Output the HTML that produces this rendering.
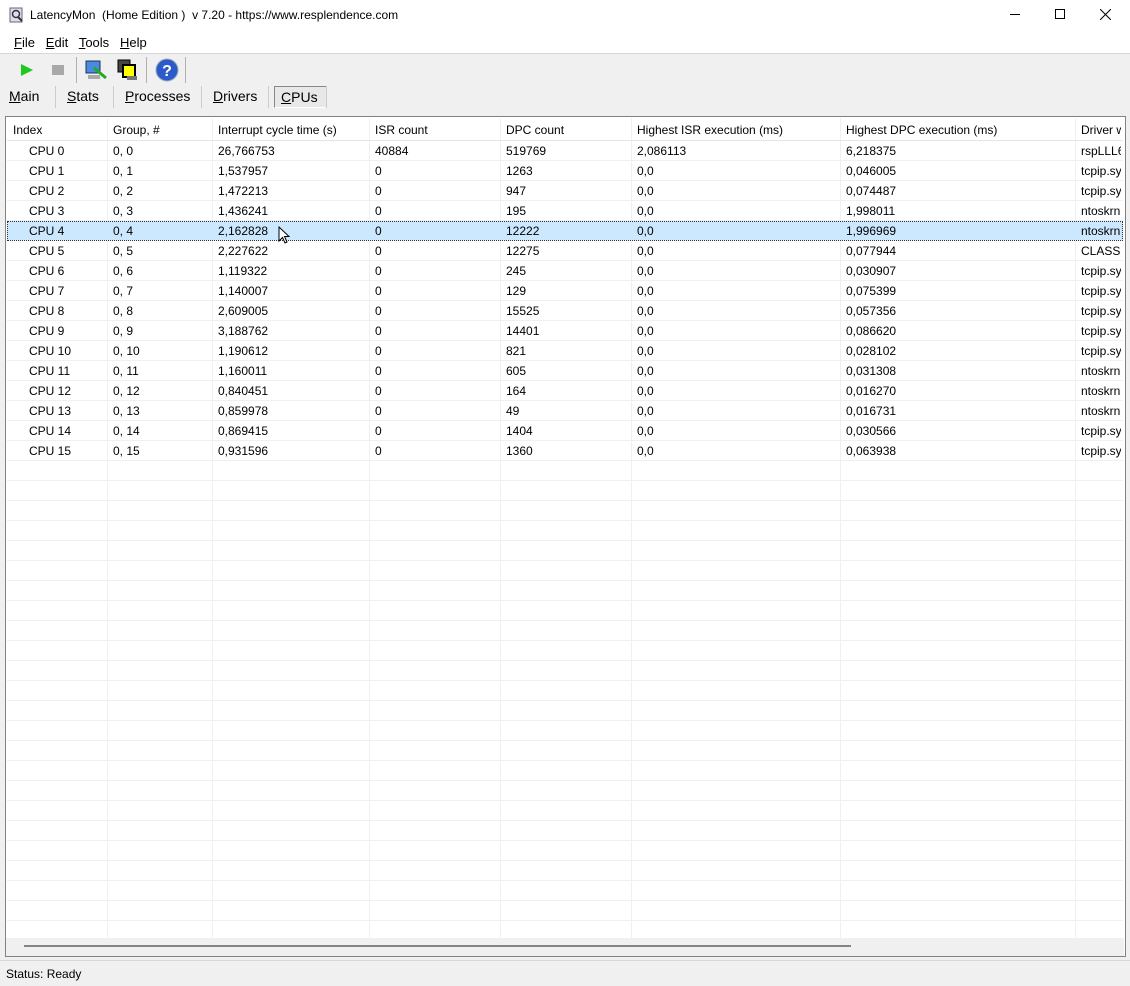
<!DOCTYPE html><html><head><style>
*{margin:0;padding:0;box-sizing:border-box}
body{width:1130px;height:986px;background:#f0f0f0;font-family:"Liberation Sans",sans-serif;font-size:12px;color:#000;position:relative;overflow:hidden}
.a{position:absolute;white-space:nowrap}
.row{position:absolute;left:7px;width:1116px;height:20px;border-bottom:1px solid #f0f0f0}
.c{position:absolute;top:3px;white-space:nowrap;overflow:hidden}
.vl{position:absolute;top:118px;height:820px;width:1px;background:#f0f0f0}
u{text-decoration:underline}
</style></head><body>
<div class="a" style="left:0;top:0;width:1130px;height:32px;background:#fff"></div>
<svg class="a" style="left:9px;top:7px" width="16" height="16"><rect x="1" y="1" width="12" height="14" fill="#dde" stroke="#667"/><circle cx="7" cy="7" r="3.5" fill="none" stroke="#334" stroke-width="1.5"/><line x1="9" y1="10" x2="13" y2="14" stroke="#334" stroke-width="2"/></svg>
<div class="a" style="left:30px;top:8px;font-size:12px">LatencyMon&nbsp; (Home Edition )&nbsp; v 7.20 - https://www.resplendence.com</div>
<div class="a" style="left:1010px;top:14px;width:10px;height:1px;background:#000"></div>
<div class="a" style="left:1055px;top:9px;width:10px;height:10px;border:1px solid #000"></div>
<svg class="a" style="left:1100px;top:9px" width="11" height="11"><path d="M0 0L11 11M11 0L0 11" stroke="#000"/></svg>
<div class="a" style="left:0;top:32px;width:1130px;height:21px;background:#fff"></div>
<div class="a" style="left:14px;top:35px;font-size:13px"><u>F</u>ile&nbsp;&nbsp; <u>E</u>dit&nbsp;&nbsp; <u>T</u>ools&nbsp;&nbsp; <u>H</u>elp</div>
<div class="a" style="left:0;top:53px;width:1130px;height:1px;background:#d8d8d8"></div>
<svg class="a" style="left:20px;top:63px" width="14" height="14"><path d="M1 1L13 7L1 13Z" fill="#1ec81e"/></svg>
<div class="a" style="left:52px;top:65px;width:12px;height:10px;background:#a8a8a8"></div>
<div class="a" style="left:76px;top:57px;width:1px;height:26px;background:#b0b0b0"></div>
<svg class="a" style="left:84px;top:58px" width="24" height="24"><rect x="2" y="3" width="14" height="12" fill="#4a8ae0" stroke="#235"/><rect x="4" y="17" width="12" height="4" fill="#aaa"/><path d="M10 10L22 20" stroke="#2a2" stroke-width="3"/></svg>
<svg class="a" style="left:117px;top:59px" width="22" height="22"><rect x="1" y="1" width="12" height="12" fill="#444" stroke="#000"/><rect x="6" y="6" width="12" height="12" fill="#ff0" stroke="#000" stroke-width="2"/><rect x="10" y="17" width="10" height="4" fill="#777"/></svg>
<div class="a" style="left:146px;top:57px;width:1px;height:26px;background:#b0b0b0"></div>
<svg class="a" style="left:155px;top:58px" width="24" height="24"><circle cx="12" cy="12" r="11" fill="#2a5bc8" stroke="#9ab"/><text x="12" y="18" font-size="16" font-weight="bold" fill="#fff" text-anchor="middle" font-family="Liberation Sans">?</text></svg>
<div class="a" style="left:185px;top:57px;width:1px;height:26px;background:#b0b0b0"></div>
<div class="a" style="left:9px;top:88px;font-size:14px"><u>M</u>ain</div>
<div class="a" style="left:55px;top:86px;width:1px;height:22px;background:#ccc"></div>
<div class="a" style="left:67px;top:88px;font-size:14px"><u>S</u>tats</div>
<div class="a" style="left:113px;top:86px;width:1px;height:22px;background:#ccc"></div>
<div class="a" style="left:125px;top:88px;font-size:14px"><u>P</u>rocesses</div>
<div class="a" style="left:201px;top:86px;width:1px;height:22px;background:#ccc"></div>
<div class="a" style="left:213px;top:88px;font-size:14px"><u>D</u>rivers</div>
<div class="a" style="left:268px;top:86px;width:1px;height:22px;background:#ccc"></div>
<div class="a" style="left:274px;top:86px;width:53px;height:22px;border:1px solid #888;border-right-color:#fff;border-bottom-color:#fff;background:#e8e8e8"></div>
<div class="a" style="left:281px;top:89px;font-size:14px"><u>C</u>PUs</div>
<div class="a" style="left:326px;top:86px;width:1px;height:22px;background:#ccc"></div>
<div class="a" style="left:5px;top:116px;width:1121px;height:841px;border:1px solid #828282;background:#fff"></div>
<div class="vl" style="left:107px"></div><div class="vl" style="left:212px"></div><div class="vl" style="left:369px"></div><div class="vl" style="left:500px"></div><div class="vl" style="left:631px"></div><div class="vl" style="left:840px"></div><div class="vl" style="left:1075px"></div>
<div id="g"></div>
<div class="a" style="left:6px;top:938px;width:1118px;height:18px;background:#f0f0f0"></div>
<div class="a" style="left:24px;top:945px;width:827px;height:2px;background:#858585"></div>
<div class="a" style="left:0;top:960px;width:1130px;height:1px;background:#d8d8d8"></div>
<div class="a" style="left:6px;top:967px">Status: Ready</div>
<script>
var H=["Index","Group, #","Interrupt cycle time (s)","ISR count","DPC count","Highest ISR execution (ms)","Highest DPC execution (ms)","Driver w"];
var X=[6,106,211,368,499,630,839,1074];
var D=[["26,766753","40884","519769","2,086113","6,218375","rspLLL6"],["1,537957","0","1263","0,0","0,046005","tcpip.sy"],["1,472213","0","947","0,0","0,074487","tcpip.sy"],["1,436241","0","195","0,0","1,998011","ntoskrn"],["2,162828","0","12222","0,0","1,996969","ntoskrn"],["2,227622","0","12275","0,0","0,077944","CLASS"],["1,119322","0","245","0,0","0,030907","tcpip.sy"],["1,140007","0","129","0,0","0,075399","tcpip.sy"],["2,609005","0","15525","0,0","0,057356","tcpip.sy"],["3,188762","0","14401","0,0","0,086620","tcpip.sy"],["1,190612","0","821","0,0","0,028102","tcpip.sy"],["1,160011","0","605","0,0","0,031308","ntoskrn"],["0,840451","0","164","0,0","0,016270","ntoskrn"],["0,859978","0","49","0,0","0,016731","ntoskrn"],["0,869415","0","1404","0,0","0,030566","tcpip.sy"],["0,931596","0","1360","0,0","0,063938","tcpip.sy"]];
var s='<div class="row" style="top:118px;height:23px;border-bottom:1px solid #e5e5e5">';
H.forEach(function(h,i){s+='<div class="c" style="top:5px;left:'+X[i]+'px;width:'+((X[i+1]||1116)-X[i]-2)+'px">'+h+'</div>'});s+='</div>';
for(var r=0;r<40;r++){var t=141+r*20;if(t>918)break;
var sel=r==4;s+='<div class="row" style="top:'+t+'px;'+(sel?'background:#cce8ff;outline:1px dotted #333;outline-offset:-1px;':'')+'">';
if(r<16){var v=["CPU "+r,"0, "+r].concat(D[r]);v.forEach(function(x,i){s+='<div class="c" style="left:'+(i==0?22:X[i])+'px;width:'+((X[i+1]||1116)-X[i]-(i==0?18:2))+'px">'+x+'</div>'})}
s+='</div>'}
document.getElementById('g').innerHTML=s;
</script>
<svg class="a" style="left:278px;top:226px" width="12" height="19"><path d="M1 1L1 15L4.5 11.5L7 17L9 16L6.5 10.5L11 10.5Z" fill="#fff" stroke="#000"/></svg>
</body></html>
